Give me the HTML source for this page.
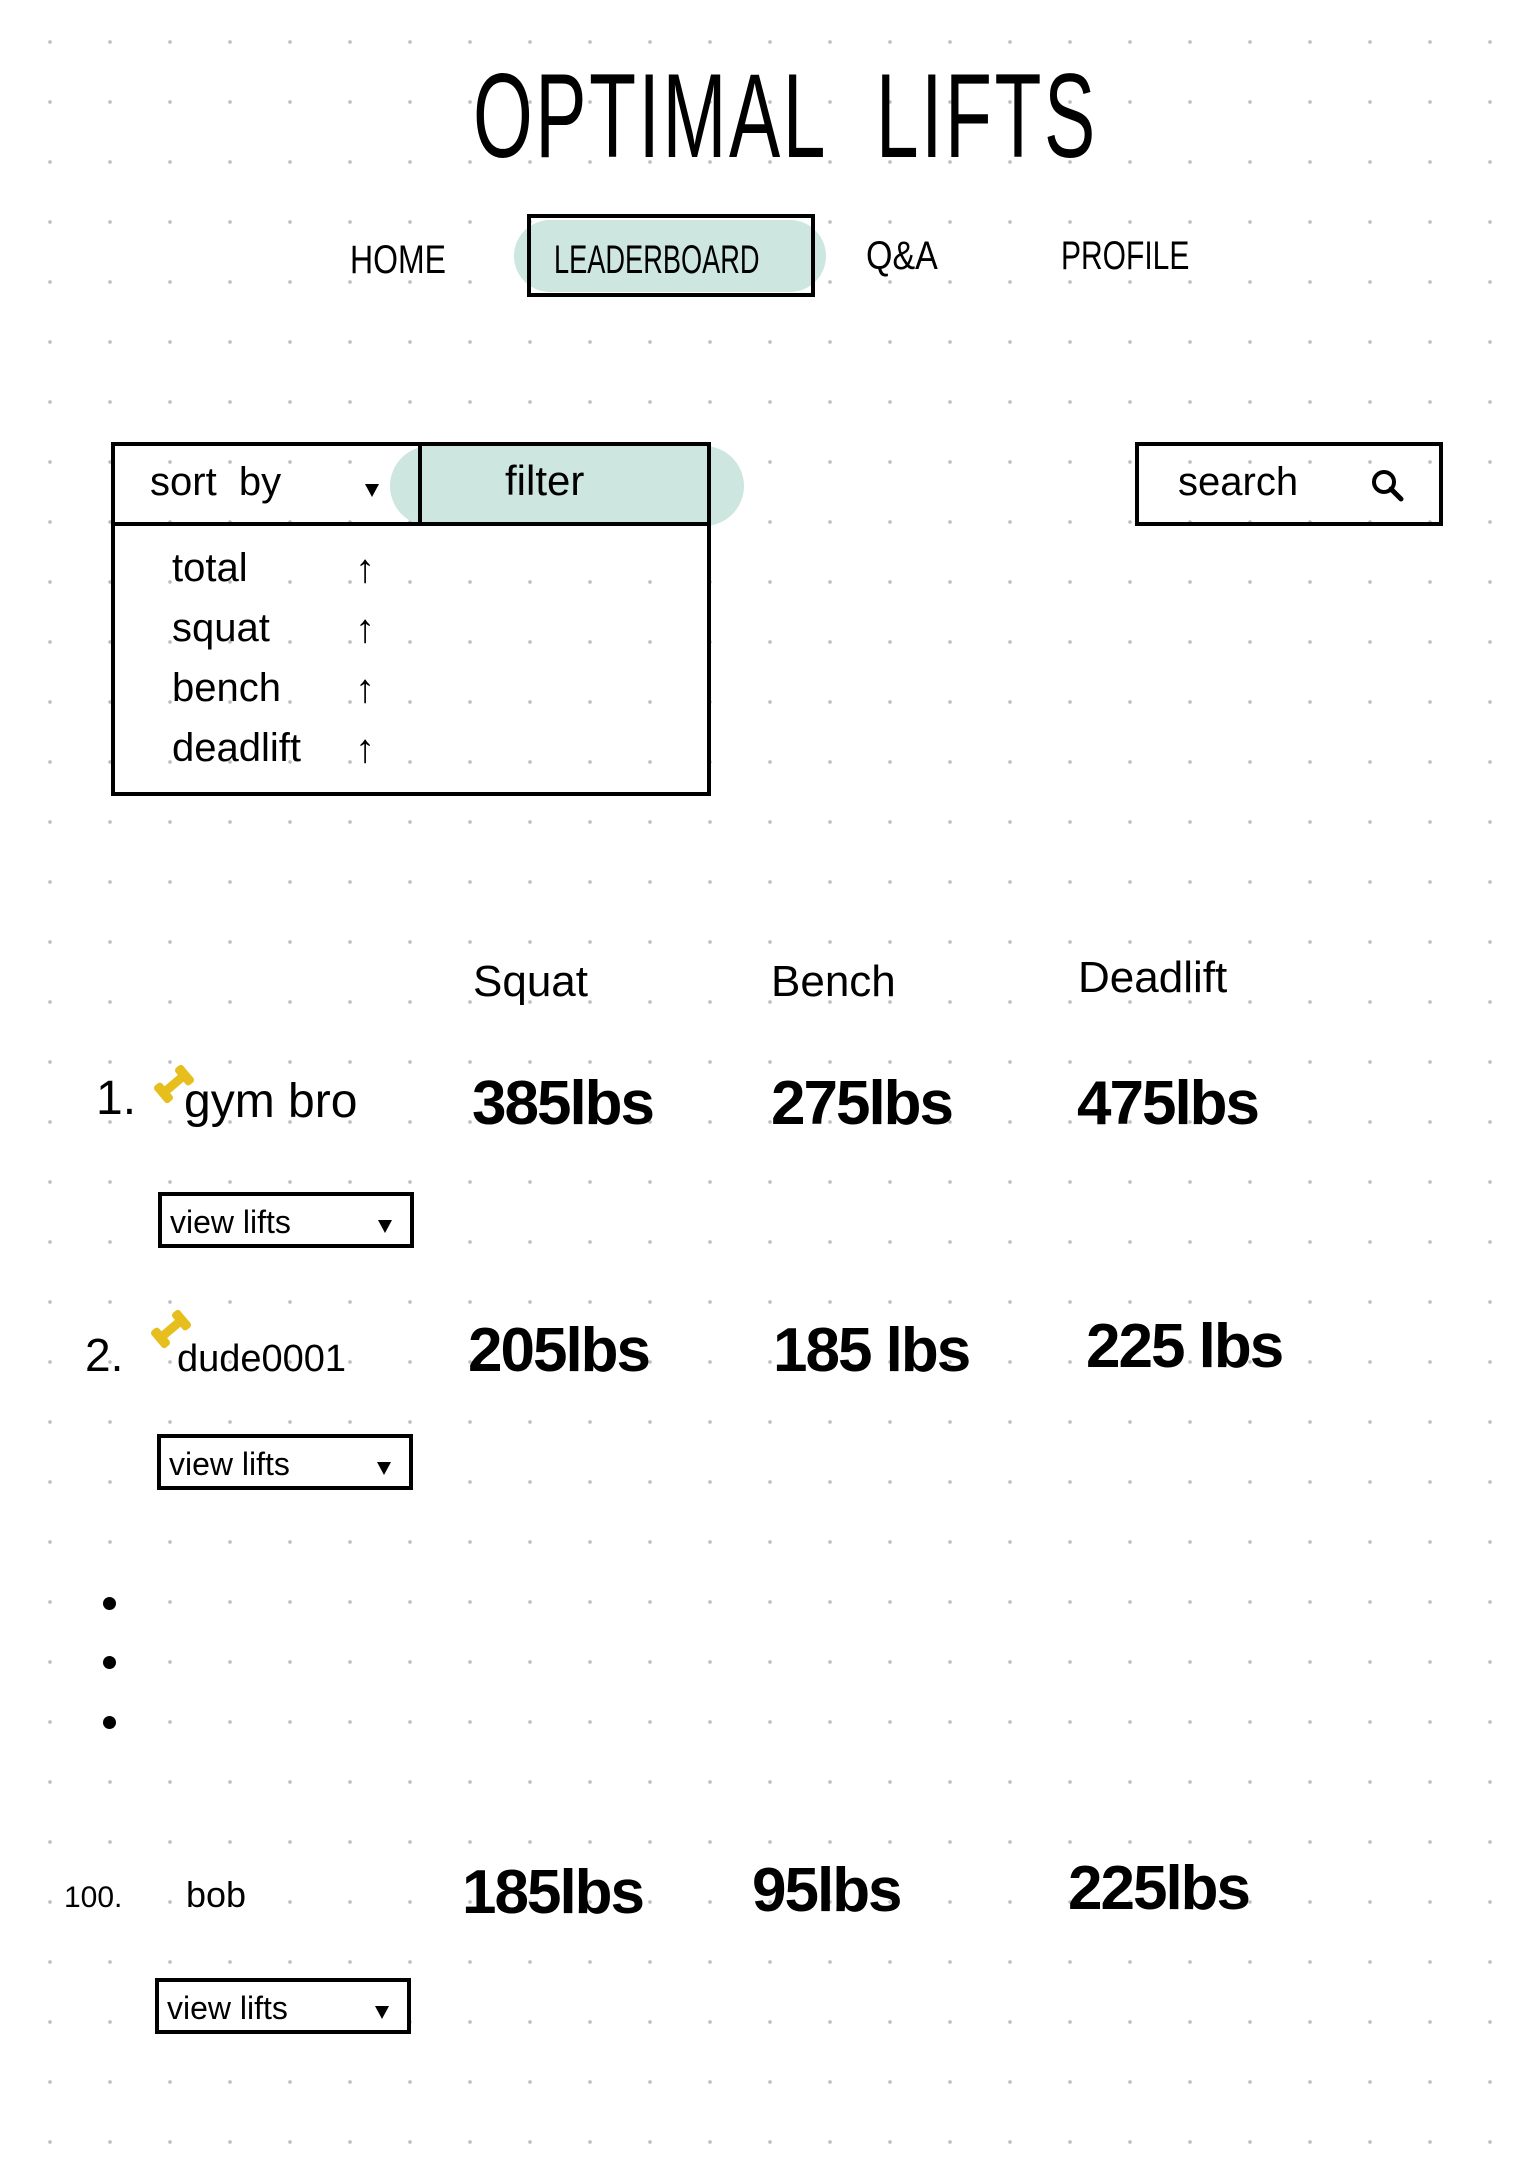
<!DOCTYPE html>
<html><head><meta charset="utf-8"><style>
html,body{margin:0;padding:0}
body{width:1539px;height:2183px;position:relative;overflow:hidden;background:#fff;
background-image:radial-gradient(circle,#bdbdbd 1.6px,transparent 2px);background-size:60px 60px;background-position:20px 12px;
font-family:"Liberation Sans",sans-serif;color:#000}
.a{position:absolute;white-space:nowrap}
.t{font-size:34px;line-height:1}
.big{font-size:62px;font-weight:bold;line-height:1;letter-spacing:-2px}
.box{position:absolute;border:4px solid #000;box-sizing:border-box}
.teal{position:absolute;background:#cde6df;border-radius:40px}
.vl{position:absolute;border:4px solid #000;box-sizing:border-box;width:256px;height:56px;background:#fff}
.vl span{position:absolute;left:8px;top:8px;font-size:32px}
.vl i{position:absolute;right:18px;top:24px;width:0;height:0;border-left:7px solid transparent;border-right:7px solid transparent;border-top:13px solid #000}
.db{position:absolute;width:44px;height:44px}
.ar{position:absolute;font-size:40px;font-weight:bold;line-height:1}
</style></head><body>
<div class="a" style="left:473px;top:56px;font-size:120px;line-height:1;transform:scaleX(.64);transform-origin:left top;letter-spacing:4px">OPTIMAL&nbsp;&nbsp;LIFTS</div>

<div class="teal" style="left:514px;top:220px;width:312px;height:72px"></div>
<div class="box" style="left:527px;top:214px;width:288px;height:83px"></div>
<div class="a t" style="left:350px;top:240px;font-size:40px;transform:scaleX(.8);transform-origin:left">HOME</div>
<div class="a t" style="left:554px;top:240px;font-size:40px;transform:scaleX(.68);transform-origin:left">LEADERBOARD</div>
<div class="a t" style="left:866px;top:236px;font-size:40px;transform:scaleX(.85);transform-origin:left">Q&amp;A</div>
<div class="a t" style="left:1061px;top:236px;font-size:40px;transform:scaleX(.75);transform-origin:left">PROFILE</div>

<div class="teal" style="left:390px;top:446px;width:354px;height:80px"></div>
<div class="box" style="left:111px;top:442px;width:600px;height:354px"></div>
<div class="box" style="left:418px;top:442px;width:293px;height:84px;background:#cde6df"></div>
<div class="a" style="left:111px;top:522px;width:600px;height:4px;background:#000"></div>
<div class="a t" style="left:150px;top:462px;font-size:40px">sort&nbsp; by</div>
<div class="a" style="left:365px;top:484px;border-left:7px solid transparent;border-right:7px solid transparent;border-top:13px solid #000"></div>
<div class="a t" style="left:505px;top:460px;font-size:42px">filter</div>
<div class="a t" style="left:172px;top:548px;font-size:40px">total</div>
<div class="a t" style="left:172px;top:608px;font-size:40px">squat</div>
<div class="a t" style="left:172px;top:668px;font-size:40px">bench</div>
<div class="a t" style="left:172px;top:728px;font-size:40px">deadlift</div>
<div class="ar" style="left:355px;top:549px">↑</div>
<div class="ar" style="left:355px;top:609px">↑</div>
<div class="ar" style="left:355px;top:669px">↑</div>
<div class="ar" style="left:355px;top:729px">↑</div>

<div class="box" style="left:1135px;top:442px;width:308px;height:84px"></div>
<div class="a t" style="left:1178px;top:462px;font-size:40px">search</div>
<svg class="a" style="left:1370px;top:468px" width="36" height="36" viewBox="0 0 36 36"><circle cx="14" cy="14" r="10" fill="none" stroke="#000" stroke-width="4"/><path d="M21 21l10 10" stroke="#000" stroke-width="5" stroke-linecap="round"/></svg>

<div class="a t" style="left:473px;top:960px;font-size:44px">Squat</div>
<div class="a t" style="left:771px;top:960px;font-size:44px">Bench</div>
<div class="a t" style="left:1078px;top:956px;font-size:44px">Deadlift</div>

<svg class="db" style="left:152px;top:1062px" viewBox="0 0 40 40"><g transform="rotate(-40 20 20)" fill="#e6bf1f"><rect x="3" y="10" width="9" height="20" rx="3"/><rect x="28" y="10" width="9" height="20" rx="3"/><rect x="10" y="16" width="20" height="8"/></g></svg>
<svg class="db" style="left:149px;top:1307px" viewBox="0 0 40 40"><g transform="rotate(-40 20 20)" fill="#e6bf1f"><rect x="3" y="10" width="9" height="20" rx="3"/><rect x="28" y="10" width="9" height="20" rx="3"/><rect x="10" y="16" width="20" height="8"/></g></svg>

<div class="a t" style="left:96px;top:1075px;font-size:48px">1.</div>
<div class="a t" style="left:184px;top:1078px;font-size:48px">gym bro</div>
<div class="a big" style="left:472px;top:1073px">385lbs</div>
<div class="a big" style="left:771px;top:1073px">275lbs</div>
<div class="a big" style="left:1077px;top:1073px">475lbs</div>
<div class="vl" style="left:158px;top:1192px"><span>view lifts</span><i></i></div>

<div class="a t" style="left:85px;top:1332px;font-size:46px">2.</div>
<div class="a t" style="left:177px;top:1340px;font-size:38px">dude0001</div>
<div class="a big" style="left:468px;top:1320px">205lbs</div>
<div class="a big" style="left:773px;top:1320px">185 lbs</div>
<div class="a big" style="left:1086px;top:1316px">225 lbs</div>
<div class="vl" style="left:157px;top:1434px"><span>view lifts</span><i></i></div>

<div class="a" style="left:103px;top:1597px;width:13px;height:13px;border-radius:50%;background:#000"></div>
<div class="a" style="left:103px;top:1656px;width:13px;height:13px;border-radius:50%;background:#000"></div>
<div class="a" style="left:103px;top:1716px;width:13px;height:13px;border-radius:50%;background:#000"></div>

<div class="a t" style="left:64px;top:1883px;font-size:30px">100.</div>
<div class="a t" style="left:186px;top:1877px;font-size:36px">bob</div>
<div class="a big" style="left:462px;top:1862px">185lbs</div>
<div class="a big" style="left:752px;top:1860px">95lbs</div>
<div class="a big" style="left:1068px;top:1858px">225lbs</div>
<div class="vl" style="left:155px;top:1978px"><span>view lifts</span><i></i></div>
</body></html>
